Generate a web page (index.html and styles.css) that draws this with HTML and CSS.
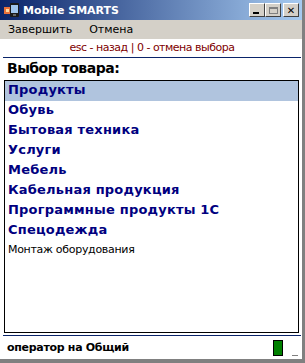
FILE: index.html
```html
<!DOCTYPE html>
<html lang="ru">
  <head>
    <meta charset="utf-8">
    <title>Mobile SMARTS</title>
    <link rel="stylesheet" href="styles.css">
  </head>
  <body>
    <div class="window">
      <!-- Заголовок окна -->
      <div class="titlebar">
        <svg class="app-icon" width="16" height="16" viewBox="0 0 16 16">
          <rect x="0" y="5" width="8" height="7" fill="#e8703a"/>
          <rect x="2" y="7" width="3" height="3" fill="#ffd9a0"/>
          <rect x="6" y="1" width="9" height="14" rx="1" fill="#1a1a1a"/>
          <rect x="7" y="3" width="7" height="8" fill="#9fc4ec"/>
          <rect x="9" y="12" width="3" height="2" fill="#666"/>
        </svg>
        <span class="title">Mobile SMARTS</span>
        <div class="caption-buttons">
          <span class="cbtn"><i class="min"></i></span>
          <span class="cbtn"><i class="max"></i></span>
          <span class="cbtn close">&#x2715;</span>
        </div>
      </div>

      <!-- Меню -->
      <div class="menubar">
        <span>Завершить</span>
        <span>Отмена</span>
      </div>

      <div class="content">
        <div class="hint">esc - назад | 0 - отмена выбора</div>
        <div class="rule"></div>
        <div class="heading">Выбор товара:</div>

        <div class="listbox">
          <div class="item selected">Продукты</div>
          <div class="item">Обувь</div>
          <div class="item">Бытовая техника</div>
          <div class="item">Услуги</div>
          <div class="item">Мебель</div>
          <div class="item">Кабельная продукция</div>
          <div class="item">Программные продукты 1С</div>
          <div class="item">Спецодежда</div>
          <div class="item plain">Монтаж оборудования</div>
        </div>

        <div class="rule bottom"></div>
        <div class="status">
          <span>оператор на Общий</span>
          <span class="signal"></span>
          <span class="grip"></span>
        </div>
      </div>
    </div>
  </body>
</html>
```

FILE: styles.css
```css
/* Allgemein */
body {
  margin: 0;
  padding: 0;
  font-family: 'DejaVu Sans', sans-serif;
  background: #d4d0c8;
}

.window {
  width: 305px;
  height: 363px;
  box-sizing: border-box;
  display: flex;
  flex-direction: column;
  border-right: 3px solid #808080;
  border-bottom: 4px solid #808080;
  box-shadow: inset -1px -1px 0 #d4d0c8;
  background: #d4d0c8;
}

/* Titelleiste */
.titlebar {
  height: 20px;
  flex: none;
  display: flex;
  align-items: center;
  background: linear-gradient(to right, #0a246a, #a6caf0);
  color: #fff;
}

.app-icon {
  margin-left: 4px;
  margin-right: 3px;
}

.title {
  font-size: 11px;
  font-weight: bold;
}

.caption-buttons {
  margin-left: auto;
  display: flex;
  margin-right: 3px;
}

.cbtn {
  width: 16px;
  height: 14px;
  box-sizing: border-box;
  background: #d4d0c8;
  border: 1px solid;
  border-color: #fff #404040 #404040 #fff;
  color: #000;
  display: flex;
  align-items: center;
  justify-content: center;
  font-size: 10px;
  font-weight: bold;
}

.cbtn.close {
  margin-left: 2px;
}

.cbtn .min {
  width: 6px;
  height: 2px;
  background: #000;
  margin-top: 6px;
  margin-right: 2px;
}

.cbtn .max {
  width: 9px;
  height: 7px;
  box-sizing: border-box;
  border: 1px solid #808080;
  border-top-width: 2px;
}

/* Menü */
.menubar {
  height: 19px;
  flex: none;
  display: flex;
  align-items: center;
  gap: 17px;
  padding-left: 8px;
  font-size: 11px;
  color: #000;
}

/* Inhalt */
.content {
  flex: 1;
  background: #fff;
  display: flex;
  flex-direction: column;
  padding: 0 2px 0 4px;
}

.hint {
  text-align: center;
  color: #800000;
  font-size: 11px;
  letter-spacing: -0.5px;
  padding-top: 2px;
  height: 14px;
}

.rule {
  height: 1px;
  background: #0a246a;
  margin: 2px -1px 0 -1px;
}

.heading {
  font-weight: bold;
  font-size: 14px;
  letter-spacing: -0.5px;
  color: #000;
  padding: 2px 0 0 3px;
  height: 20px;
}

.listbox {
  flex: 1;
  border: 1px solid #000;
  margin-right: 1px;
}

.item {
  height: 20px;
  line-height: 18px;
  padding-left: 3px;
  box-sizing: border-box;
  font-size: 13px;
  font-weight: bold;
  letter-spacing: 0.2px;
  color: #000080;
}

.item.selected {
  background: #b0c4de;
}

.item.plain {
  font-weight: normal;
  font-size: 11px;
  letter-spacing: -0.3px;
  color: #000;
}

.rule.bottom {
  margin-top: 2px;
}

.status {
  height: 23px;
  flex: none;
  display: flex;
  align-items: center;
  font-size: 11px;
  font-weight: bold;
  letter-spacing: -0.3px;
  color: #000;
  padding-left: 3px;
}

.signal {
  margin-left: auto;
  width: 10px;
  height: 16px;
  box-sizing: border-box;
  background: #008000;
  border: 1px solid #000;
}

.grip {
  width: 6px;
  height: 1px;
  background: #808080;
  margin: 15px 2px 0 9px;
}
```
